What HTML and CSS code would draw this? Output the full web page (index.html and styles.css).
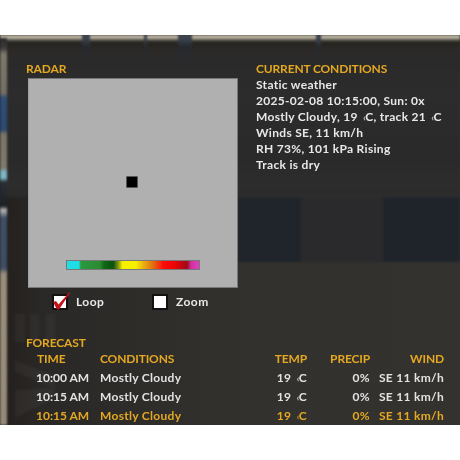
FILE: index.html
```html
<!DOCTYPE html>
<html lang="en">
<head>
<meta charset="utf-8">
<title>Weather</title>
<link rel="stylesheet" href="styles.css">
</head>
<body>
<main class="panel">
  <div class="backdrop" aria-hidden="true">
    <div class="bd-top"></div>
    <div class="bd-post p1"></div>
    <div class="bd-post p2"></div>
    <div class="bd-post p3"></div>
    <div class="bd-post p4"></div>
    <div class="bd-wall"></div>
    <svg class="bd-mark" viewBox="0 0 50 115" width="50" height="115">
      <path d="M0 0H10V28H0ZM15 0H24V28H15ZM31 0H40V28H31Z" fill="#fff" opacity=".035"/>
      <path d="M0 46L40 62V74L0 58ZM0 76L40 74V84L0 104Z" fill="#fff" opacity=".04"/>
    </svg>
    <div class="bd-left"></div>
  </div>
  <div class="content">
    <div class="top">
      <section class="radar-col">
        <h2 class="title">RADAR</h2>
        <div class="radar">
          <div class="dot"></div>
          <div class="scale"></div>
        </div>
        <div class="toggles">
          <div class="toggle">
            <span class="box">
              <svg class="tick" viewBox="0 0 18 20" width="18" height="20"><path d="M1 11 L4 10 L6.5 13.5 L17.5 1 L18 2 L7 18.5 L5 18.5 Z" fill="#c4121a"/></svg>
            </span>
            <span class="label">Loop</span>
          </div>
          <div class="toggle">
            <span class="box"></span>
            <span class="label">Zoom</span>
          </div>
        </div>
      </section>
      <section class="current">
        <h2 class="title">CURRENT CONDITIONS</h2>
        <p>Static weather</p>
        <p>2025-02-08 10:15:00, Sun: 0x</p>
        <p>Mostly Cloudy, 19 <span class="deg">‹</span>C, track 21 <span class="deg">‹</span>C</p>
        <p>Winds SE, 11 km/h</p>
        <p>RH 73%, 101 kPa Rising</p>
        <p>Track is dry</p>
      </section>
    </div>
    <section class="forecast">
      <h2 class="title">FORECAST</h2>
      <div class="row head">
        <span class="time-h">TIME</span><span>CONDITIONS</span><span class="r">TEMP</span><span class="r">PRECIP</span><span class="r">WIND</span>
      </div>
      <div class="row data">
        <span class="time">10:00 AM</span><span>Mostly Cloudy</span><span class="r">19 <span class="deg">‹</span>C</span><span class="r">0%</span><span class="r">SE 11 km/h</span>
      </div>
      <div class="row data">
        <span class="time">10:15 AM</span><span>Mostly Cloudy</span><span class="r">19 <span class="deg">‹</span>C</span><span class="r">0%</span><span class="r">SE 11 km/h</span>
      </div>
      <div class="row data now">
        <span class="time">10:15 AM</span><span>Mostly Cloudy</span><span class="r">19 <span class="deg">‹</span>C</span><span class="r">0%</span><span class="r">SE 11 km/h</span>
      </div>
    </section>
  </div>
</main>
</body>
</html>
```
FILE: styles.css
```css
* { box-sizing: border-box; }
html, body { margin: 0; padding: 0; background: #fff; }
body { width: 460px; height: 460px; overflow: hidden; font-family: Lato, "Open Sans", sans-serif; }

.panel {
  position: relative;
  margin-top: 35px;
  height: 390px;
  overflow: hidden;
  background: linear-gradient(90deg, #221f1d 0, #2a2826 40px, #33312e 240px, #34322e 460px);
}
.backdrop { position: absolute; inset: 0; filter: blur(0.8px); }
.bd-top {
  position: absolute; left: 0; right: 0; top: 0; height: 162px;
  background: linear-gradient(#bdb6a5 0, #b5ae9c 3px, #5a5750 5px, #26241f 7px, #2b2a29 16px, #2c2c2d 60px, #2a2a2b 125px, #2d2d2d 150px, #2b2b2c 162px);
}
.bd-post { position: absolute; top: 0; height: 34px; background: linear-gradient(#434a52 0, #343c46 6px, rgba(35,42,52,.5) 12px, rgba(35,42,52,0) 34px); }
.p1 { left: 82px; width: 8px; }
.p2 { left: 144px; width: 3px; }
.p3 { left: 178px; width: 14px; }
.p4 { left: 316px; width: 5px; }
.bd-wall {
  position: absolute; left: 238px; right: 0; top: 161px; height: 66px;
  border-top: 1px solid #33332f;
  background: linear-gradient(90deg, #20252b 0, #20252b 62px, #2a2a2c 64px, #2a2a2c 144px, #1f242b 146px, #1f242b 222px);
}
.bd-mark { position: absolute; left: 15px; top: 279px; }
.bd-left {
  position: absolute; left: 0; top: 3px; bottom: 0; width: 7px;
  background: linear-gradient(#2a2b2a 0, #3a3b3a 10px, #7d786c 16px, #756f63 55px, #2f4d75 60px, #2d4a72 92px, #7a7466 96px, #807a6c 130px, #7bb6c4 134px, #7bb6c4 140px, #2a2f36 144px, #1d2026 168px, #b8b8b8 172px, #3f4f63 180px, #3e4e62 230px, #9a8e7b 236px, #958a78 387px);
}

.content {
  position: relative;
  display: flex; flex-direction: column;
  padding: 26px 16px 0 26px;
  height: 100%;
  filter: blur(0.4px);
}
.top { display: flex; }
.radar-col { width: 230px; flex: none; }
.title {
  margin: 0;
  font-size: 12px; line-height: 16px; font-weight: 700;
  letter-spacing: -.15px;
  color: #e4a822;
}
.radar {
  position: relative;
  width: 210px; height: 210px;
  margin-left: 2px; margin-top: 1px;
  background: #b0b0b0;
  border: 1px solid #777;
  border-left-color: #a0a0a0;
  display: flex; flex-direction: column; align-items: center;
}
.dot {
  width: 12px; height: 12px; margin-top: 97px; margin-right: 2px;
  background: #000; border: 1px solid #555; border-radius: 1px;
}
.scale {
  width: 134px; height: 10px; margin-top: 72px;
  border: 1px solid #777;
  background: linear-gradient(90deg,
    #1fdde4 0, #1fdde4 9%, #2a9a3f 10.5%, #2c8a32 25%, #0f6a14 28%, #0c500e 35%,
    #8a9a10 39%, #f4f000 42%, #f8f000 52%, #e8b010 58%, #e07010 65%, #ff0a0a 73%,
    #e80505 82%, #a00818 91%, #d030a0 94%, #e040c0 100%);
}
.toggles { display: flex; padding: 6px 0 0 26px; }
.toggle { display: flex; align-items: center; gap: 8px; width: 100px; }
.box {
  position: relative; display: block;
  width: 16px; height: 16px;
  background: #fff; border: 2px solid #111; border-radius: 1px;
}
.tick { position: absolute; left: -2px; top: -5px; }
.label { font-size: 12px; line-height: 16px; font-weight: 700; letter-spacing: .45px; color: #e8e8e8; }

.current { white-space: nowrap; }
.current p {
  margin: 0;
  font-size: 12px; line-height: 16px; font-weight: 700;
  letter-spacing: .3px;
  color: #e8e8e8;
}
.deg { font-size: 10px; line-height: 0; opacity: .75; margin-left: 2px; margin-right: -1px; }

.forecast { margin-top: 25px; }
.row {
  display: grid;
  grid-template-columns: 74px 150px 57px 63px 74px;
  font-size: 12px; font-weight: 700;
  letter-spacing: .3px;
  white-space: nowrap;
}
.row .r { text-align: right; }
.head { color: #e4a822; line-height: 16px; letter-spacing: -.15px; }
.time-h { padding-left: 11px; }
.time { padding-left: 10px; letter-spacing: 0; }
.data { color: #e2e2e2; line-height: 19px; }
.head + .data { margin-top: 1px; }
.now { color: #e4a822; }
```
